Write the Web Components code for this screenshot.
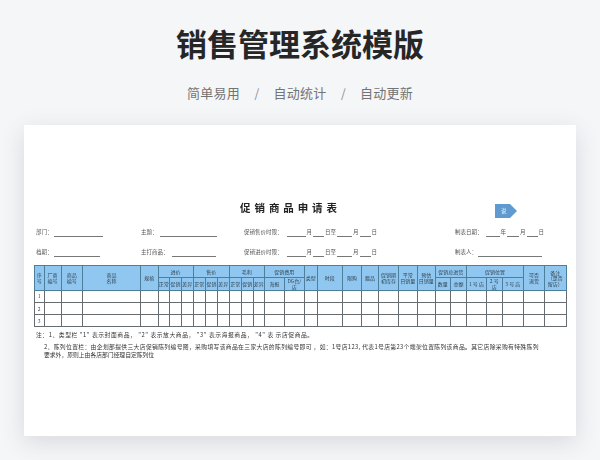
<!DOCTYPE html>
<html lang="zh"><head><meta charset="utf-8"><title>销售管理系统模版</title>
<style>
html,body{margin:0;padding:0;background:#f5f6f8;width:600px;height:460px;overflow:hidden;font-family:"Noto Sans CJK SC","Noto Sans",sans-serif}
</style></head><body>
<sales-hero heading="销售管理系统模版">
  <span>简单易用</span><span>自动统计</span><span>自动更新</span>
</sales-hero>
<doc-sheet>
  <form-grid></form-grid>
  <promo-table></promo-table>
  <doc-notes></doc-notes>
</doc-sheet>
<script>
class SalesHero extends HTMLElement{constructor(){super();const s=this.attachShadow({mode:'open'});
const items=[...this.children];
s.innerHTML=`<style>
:host{display:flex;flex-direction:column;align-items:center;height:125px;box-sizing:border-box;padding-top:20px;color:#222}
h1{margin:0;font-size:31px;line-height:46px;font-weight:700;color:#262626}
.tags{display:flex;align-items:center;margin-top:18px;font-size:13px;line-height:18px;color:#737373;letter-spacing:.25px;gap:0}
.sep{width:33.5px;text-align:center;color:#8a8a8a;font-size:12px;letter-spacing:0}
::slotted(span){display:block}
</style><h1></h1><div class="tags"><slot name="a"></slot><span class="sep">/</span><slot name="b"></slot><span class="sep">/</span><slot name="c"></slot></div>`;
s.querySelector('h1').textContent=this.getAttribute('heading');
['a','b','c'].forEach((n,i)=>items[i]&&items[i].setAttribute('slot',n));
}}
class DocSheet extends HTMLElement{constructor(){super();const s=this.attachShadow({mode:'open'});
s.innerHTML=`<style>
:host{display:block;position:relative;width:552px;height:311px;margin:0 24px;background:#fff;box-shadow:0 6px 22px rgba(60,70,90,.16);box-sizing:border-box;padding:76px 10px 0 10px;color:#333}
.inner{filter:blur(.4px)}
h2{margin:0;text-align:center;font-size:10.5px;line-height:14px;font-weight:700;letter-spacing:3.9px;color:#222;padding-right:19px}
.tag{position:absolute;left:471px;top:79px;width:22px;height:14px;filter:blur(.4px)}
.tag svg{display:block}
.tag span{position:absolute;left:6px;top:2px;font-size:5.5px;line-height:10px;color:#e8f1fa}
</style><div class="inner"><h2>促销商品申请表</h2><slot></slot></div>
<div class="tag"><svg width="22" height="14" viewBox="0 0 22 14"><path d="M0 0H15L22 7L15 14H0Z" fill="#5f9bd0"/></svg><span>说</span></div>`;
}}
class FormGrid extends HTMLElement{constructor(){super();const s=this.attachShadow({mode:'open'});
const u=(w,m)=>`<i style="width:${w}px${m?';margin-left:'+m+'px':''}"></i>`;
const cell=(w,h)=>`<div class="c" style="width:${w}px">${h}</div>`;
s.innerHTML=`<style>
:host{display:flex;flex-direction:column;gap:10px;padding:12px 0 0 2px;font-size:5.5px;line-height:10px;color:#555}
.r{display:flex;height:10px;align-items:flex-start;white-space:nowrap}
.c{display:flex;align-items:flex-end;flex:none;height:10px}
i{display:inline-block;flex:none;height:9px;border-bottom:.6px solid #777;margin:0 1px}
</style>
<div class="r">${cell(105,'部门：'+u(49))}${cell(103,'主题：'+u(57,2))}${cell(211,'促销售价时限：'+u(19,4)+'月'+u(11)+'日至'+u(15)+'月'+u(11)+'日')}${cell(100,'制表日期：'+u(14,3)+'年'+u(12)+'月'+u(11)+'日')}</div>
<div class="r">${cell(105,'档期：'+u(46))}${cell(103,'主打商品：'+u(44,3))}${cell(211,'促销进价时限：'+u(19,4)+'月'+u(11)+'日至'+u(15)+'月'+u(11)+'日')}${cell(100,'制表人：'+u(64))}</div>`;
}}
class PromoTable extends HTMLElement{constructor(){super();const s=this.attachShadow({mode:'open'});
const xs=[34,43.5,60.5,82,140,157.5,169,181,192.7,205,217,228.7,240.7,252.7,264,284,303.7,316.7,342,361,378,398,416.7,434.7,450,466,486,501.7,523,544,565.7];
const cols=xs.slice(1).map((x,i)=>`<col style="width:${(x-xs[i]).toFixed(1)}px">`).join('');
const rs=t=>`<th rowspan="2">${t}</th>`;
const cs=(n,t)=>`<th colspan="${n}">${t}</th>`;
const top=['序<br>号','厂商<br>编号','商品<br>编号','商品<br>名称','规格'].map(rs).join('')+cs(3,'进价')+cs(3,'售价')+cs(3,'毛利')+cs(2,'促销费用')+['类型','时段','限购','赠品','促销期<br>初库存','平常<br>日销量','预估<br>日销量'].map(rs).join('')+cs(2,'促销总进货')+cs(3,'促销位置')+['可否<br>退货','备注<br>（是否<br>留店）'].map(rs).join('');
const tri='<th>正常</th><th>促销</th><th>差异</th>';
const sub=tri+tri+tri+'<th>海报</th><th>DG台/<br>店</th><th>数量</th><th>金额</th><th>1 号 店</th><th>2 号<br>店</th><th>3 号 店</th>';
const rows=[1,2,3].map(n=>`<tr><td>${n}</td>${'<td></td>'.repeat(29)}</tr>`).join('');
s.innerHTML=`<style>
:host{display:block;margin-top:8px}
table{border-collapse:collapse;table-layout:fixed;width:531.7px;font-size:5px;line-height:5.5px;color:#34444f}
th,td{padding:0;border:1px solid #55707f;text-align:center;vertical-align:middle;overflow:hidden;font-weight:400;box-sizing:border-box}
th{background:#90c7f1;height:12.3px;border-color:#4d7f9c}
td{height:12.3px;border-color:#666c70;font-size:5px;color:#444}
</style><table><colgroup>${cols}</colgroup><thead><tr>${top}</tr><tr>${sub}</tr></thead><tbody>${rows}</tbody></table>`;
}}
class DocNotes extends HTMLElement{constructor(){super();const s=this.attachShadow({mode:'open'});
s.innerHTML=`<style>
:host{display:block;margin-top:4px;padding-left:2px;font-size:5.8px;color:#333;white-space:nowrap}
p{margin:0;line-height:8px}
.a{margin-bottom:4px;letter-spacing:.55px}
.b{padding-left:8px;letter-spacing:.35px}
.c{padding-left:8px;letter-spacing:0}
</style>
<p class="a">注：1、类型栏 "1" 表示封面商品， "2" 表示放大商品， "3" 表示海报商品， "4" 表 示店促商品。</p>
<p class="b">2、陈列位置栏：由企划部提供三大店促销陈列编号图，采购填写该商品在三家大店的陈列编号即可 ，如：1号店123, 代表1号店第23个端架位置陈列该商品。其它店除采购有特殊陈列</p>
<p class="c">要求外，原则上由各店部门经理自定陈列位</p>`;
}}
customElements.define('sales-hero',SalesHero);
customElements.define('doc-sheet',DocSheet);
customElements.define('form-grid',FormGrid);
customElements.define('promo-table',PromoTable);
customElements.define('doc-notes',DocNotes);
</script>
</body></html>
